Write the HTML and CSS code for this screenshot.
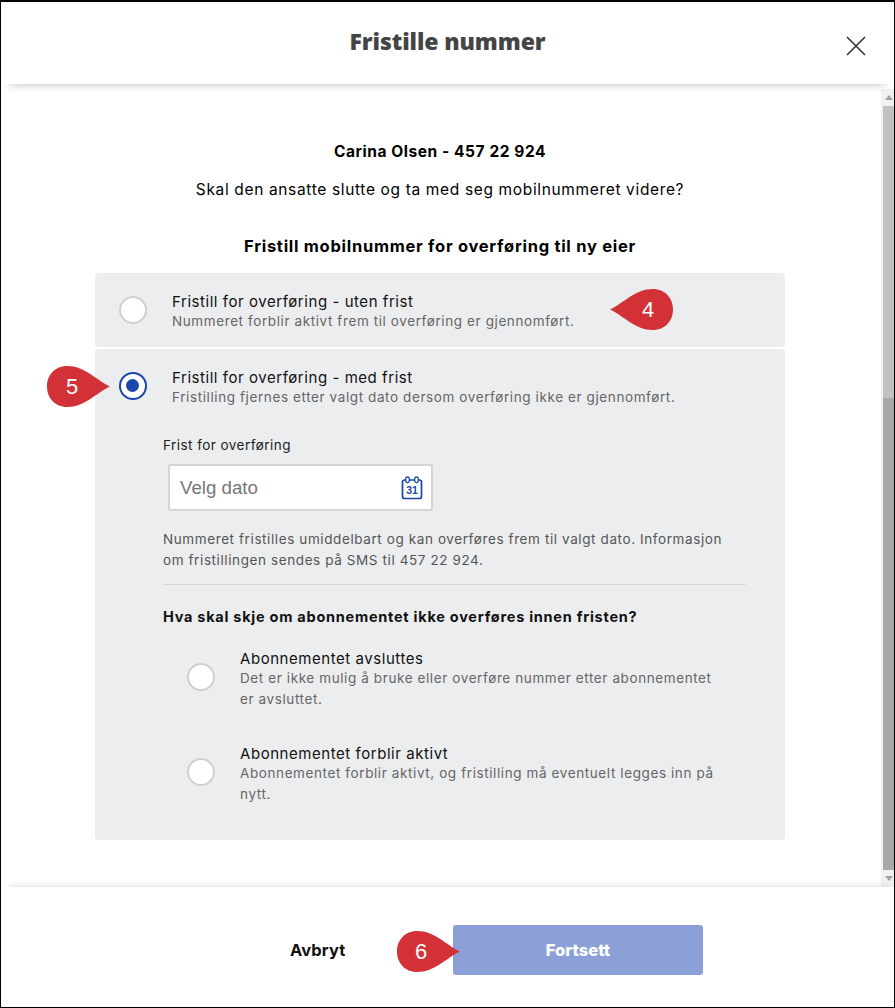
FILE: index.html
```html
<!DOCTYPE html>
<html lang="no">
<head>
<meta charset="utf-8">
<title>Fristille nummer</title>
<link rel="stylesheet" href="styles.css">
</head>
<body>
<div class="modal">
  <header class="head">
    <h1 class="title">Fristille nummer</h1>
    <button class="close" aria-label="Lukk"><svg width="22" height="22" viewBox="0 0 22 22"><path d="M2 2 L20 20 M20 2 L2 20" stroke="#333" stroke-width="1.6" fill="none"/></svg></button>
  </header>
  <div class="middle">
    <main class="content">
      <p class="who">Carina Olsen - 457 22 924</p>
      <p class="question">Skal den ansatte slutte og ta med seg mobilnummeret videre?</p>
      <h2 class="section">Fristill mobilnummer for overføring til ny eier</h2>
      <section class="panel panel-first">
        <div class="option">
          <span class="radio"></span>
          <div class="texts">
            <div class="opt-title">Fristill for overføring - uten frist</div>
            <div class="opt-desc">Nummeret forblir aktivt frem til overføring er gjennomført.</div>
          </div>
        </div>
      </section>
      <section class="panel panel-second">
        <div class="option">
          <span class="radio radio-on"></span>
          <div class="texts">
            <div class="opt-title">Fristill for overføring - med frist</div>
            <div class="opt-desc">Fristilling fjernes etter valgt dato dersom overføring ikke er gjennomført.</div>
          </div>
        </div>
        <div class="details">
          <label class="field-label">Frist for overføring</label>
          <div class="date-input">
            <span class="placeholder">Velg dato</span>
            <svg class="cal" width="22" height="24" viewBox="0 0 22 24">
              <rect x="1.5" y="4" width="19" height="18.5" rx="2" fill="none" stroke="#1a47a8" stroke-width="1.7"/>
              <rect x="4.7" y="1" width="3.6" height="5.6" rx="1.8" fill="#fff" stroke="#1a47a8" stroke-width="1.3"/>
              <rect x="13.7" y="1" width="3.6" height="5.6" rx="1.8" fill="#fff" stroke="#1a47a8" stroke-width="1.3"/>
              <text x="11" y="17.5" text-anchor="middle" class="cal-num">31</text>
            </svg>
          </div>
          <p class="info">Nummeret fristilles umiddelbart og kan overføres frem til valgt dato. Informasjon om fristillingen sendes på SMS til 457 22 924.</p>
          <hr class="rule">
          <h3 class="sub">Hva skal skje om abonnementet ikke overføres innen fristen?</h3>
          <div class="suboption">
            <span class="radio"></span>
            <div class="texts">
              <div class="opt-title">Abonnementet avsluttes</div>
              <div class="opt-desc wrap">Det er ikke mulig å bruke eller overføre nummer etter abonnementet er avsluttet.</div>
            </div>
          </div>
          <div class="suboption">
            <span class="radio"></span>
            <div class="texts">
              <div class="opt-title">Abonnementet forblir aktivt</div>
              <div class="opt-desc wrap">Abonnementet forblir aktivt, og fristilling må eventuelt legges inn på nytt.</div>
            </div>
          </div>
        </div>
      </section>
    </main>
    <div class="scrollbar">
      <span class="arrow arrow-up"></span>
      <span class="track"></span>
      <span class="thumb"></span>
      <span class="arrow arrow-down"></span>
    </div>
  </div>
  <footer class="foot">
    <button class="cancel">Avbryt</button>
    <button class="next">Fortsett</button>
  </footer>

  <div class="callout c4">
    <svg width="64" height="41" viewBox="0 0 64 41"><path d="M0 20.5 C14 14 25 0 43 0 C55 0 63 9 63 20.5 C63 32 55 41 43 41 C25 41 14 27 0 20.5 Z" fill="#d33138"/></svg>
    <span class="num">4</span>
  </div>
  <div class="callout c5">
    <svg width="64" height="41" viewBox="0 0 64 41"><path d="M63 20.5 C49 14 38 0 20 0 C8 0 0 9 0 20.5 C0 32 8 41 20 41 C38 41 49 27 63 20.5 Z" fill="#d33138"/></svg>
    <span class="num">5</span>
  </div>
  <div class="callout c6">
    <svg width="64" height="41" viewBox="0 0 64 41"><path d="M63 20.5 C49 14 38 0 20 0 C8 0 0 9 0 20.5 C0 32 8 41 20 41 C38 41 49 27 63 20.5 Z" fill="#d33138"/></svg>
    <span class="num">6</span>
  </div>
</div>
</body>
</html>
```
FILE: styles.css
```css
* { box-sizing: border-box; }
html, body { margin: 0; padding: 0; }
body { background: #fff; font-family: Inter, "Open Sans", sans-serif; color: #000; }
.modal {
  position: relative;
  width: 895px;
  height: 1008px;
  border: 1px solid #000;
  border-top-width: 2px;
  display: flex;
  flex-direction: column;
  background: #fff;
  overflow: hidden;
}
.head {
  position: relative;
  height: 82px;
  flex: none;
  display: flex;
  justify-content: center;
  padding-top: 24px;
  box-shadow: 0 8px 10px -9px rgba(0,0,0,.32);
  z-index: 2;
}
.title { margin: 0; font-size: 23px; line-height: 30px; font-weight: 800; color: #444; font-family: "Open Sans", sans-serif; letter-spacing: -.1px; }
.close { position: absolute; right: 27px; top: 33px; width: 22px; height: 22px; padding: 0; border: 0; background: none; display: flex; }
.middle { flex: 1; display: flex; min-height: 0; padding-top: 5px; }
.content { flex: 1; min-width: 0; padding: 53px 96px 0 94px; display: flex; flex-direction: column; align-items: stretch; }
.who { margin: 0; text-align: center; font-size: 15.5px; line-height: 20px; font-weight: 700; letter-spacing: .56px; }
.question { margin: 17px 0 0; text-align: center; font-size: 15.5px; line-height: 22px; letter-spacing: .65px; }
.section { margin: 34px 0 0; text-align: center; font-size: 16.5px; line-height: 22px; font-weight: 700; letter-spacing: .72px; }
.panel { background: #ecedef; border-radius: 4px; }
.panel-first { margin-top: 16px; height: 74px; display: flex; align-items: center; }
.panel-second { margin-top: 2px; height: 491px; padding-top: 15px; }
.option { display: flex; align-items: center; padding-left: 24px; gap: 25px; }
.option .texts { padding-top: 4px; }
.radio { flex: none; width: 28px; height: 28px; border-radius: 50%; background: #fff; border: 2px solid #d0d0d0; }
.radio-on { border: 2.5px solid #1a47a8; position: relative; }
.radio-on::after { content: ""; position: absolute; left: 5px; top: 5px; width: 13px; height: 13px; border-radius: 50%; background: #1a47a8; }
.opt-title { font-size: 15px; line-height: 20px; color: #111; letter-spacing: .55px; }
.opt-desc { font-size: 13.5px; line-height: 21px; margin-top: -1px; color: #666; letter-spacing: .6px; }
.details { padding: 28px 39px 0 68px; }
.field-label { display: block; font-size: 13.5px; line-height: 18px; color: #222; letter-spacing: .45px; }
.date-input { margin: 10px 0 0 5px; width: 265px; height: 47px; background: #fff; border: 2px solid #d4d4d4; border-radius: 3px; display: flex; align-items: center; justify-content: space-between; padding: 0 8px 0 10px; }
.placeholder { font-family: "Liberation Sans", sans-serif; font-size: 18.7px; color: #777; }
.cal-num { font-family: "Liberation Sans", sans-serif; font-size: 10.5px; font-weight: 700; fill: #1a47a8; }
.info { margin: 18px 0 0; font-size: 13.5px; line-height: 21px; color: #555; letter-spacing: .6px; }
.rule { margin: 13px 0 0; border: 0; border-top: 1px solid #d8d8d8; }
.sub { margin: 22px 0 0; font-size: 14.5px; line-height: 20px; font-weight: 700; color: #111; letter-spacing: .74px; }
.suboption { display: flex; align-items: flex-start; gap: 25px; padding-left: 24px; margin-top: 22px; }
.suboption .radio { margin-top: 14px; }
.suboption + .suboption { margin-top: 34px; }
.wrap { width: 478px; }
.scrollbar { flex: none; width: 13px; display: flex; flex-direction: column; align-items: stretch; background: #f1f1f1; height: 798px; padding-left: 2px; }
.arrow { height: 17px; flex: none; position: relative; }
.arrow::after { content: ""; position: absolute; left: 2px; border-left: 4px solid transparent; border-right: 4px solid transparent; }
.arrow-up::after { top: 6px; border-bottom: 5px solid #a0a0a0; }
.arrow-down::after { top: 6px; border-top: 5px solid #a0a0a0; }
.track { height: 292px; background: #c1c1c1; flex: none; }
.thumb { flex: 1; background: #a8a8a8; }
.foot {
  height: 120px;
  flex: none;
  display: flex;
  align-items: center;
  padding-left: 289px;
  padding-top: 6px;
  box-shadow: 0 -6px 8px -6px rgba(0,0,0,.15);
  position: relative;
}
.cancel { border: 0; background: none; padding: 0; font: 700 16.5px Inter, sans-serif; letter-spacing: .1px; color: #111; width: 163px; text-align: left; }
.next { border: 0; width: 250px; height: 50px; border-radius: 3px; background: #8aa0d6; color: #fff; font: 800 16.5px Inter, sans-serif; }
.callout { position: absolute; width: 64px; height: 41px; z-index: 5; display: flex; align-items: center; }
.callout svg { position: absolute; left: 0; top: 0; }
.num { position: relative; font-family: "Liberation Sans", sans-serif; font-size: 22px; color: #fff; text-align: center; }
.c4 { left: 609px; top: 287px; }
.c4 .num { margin-left: 18px; width: 40px; }
.c5 { left: 46px; top: 364px; }
.c5 .num { width: 50px; }
.c6 { left: 396px; top: 929px; }
.c6 .num { width: 48px; }
```
